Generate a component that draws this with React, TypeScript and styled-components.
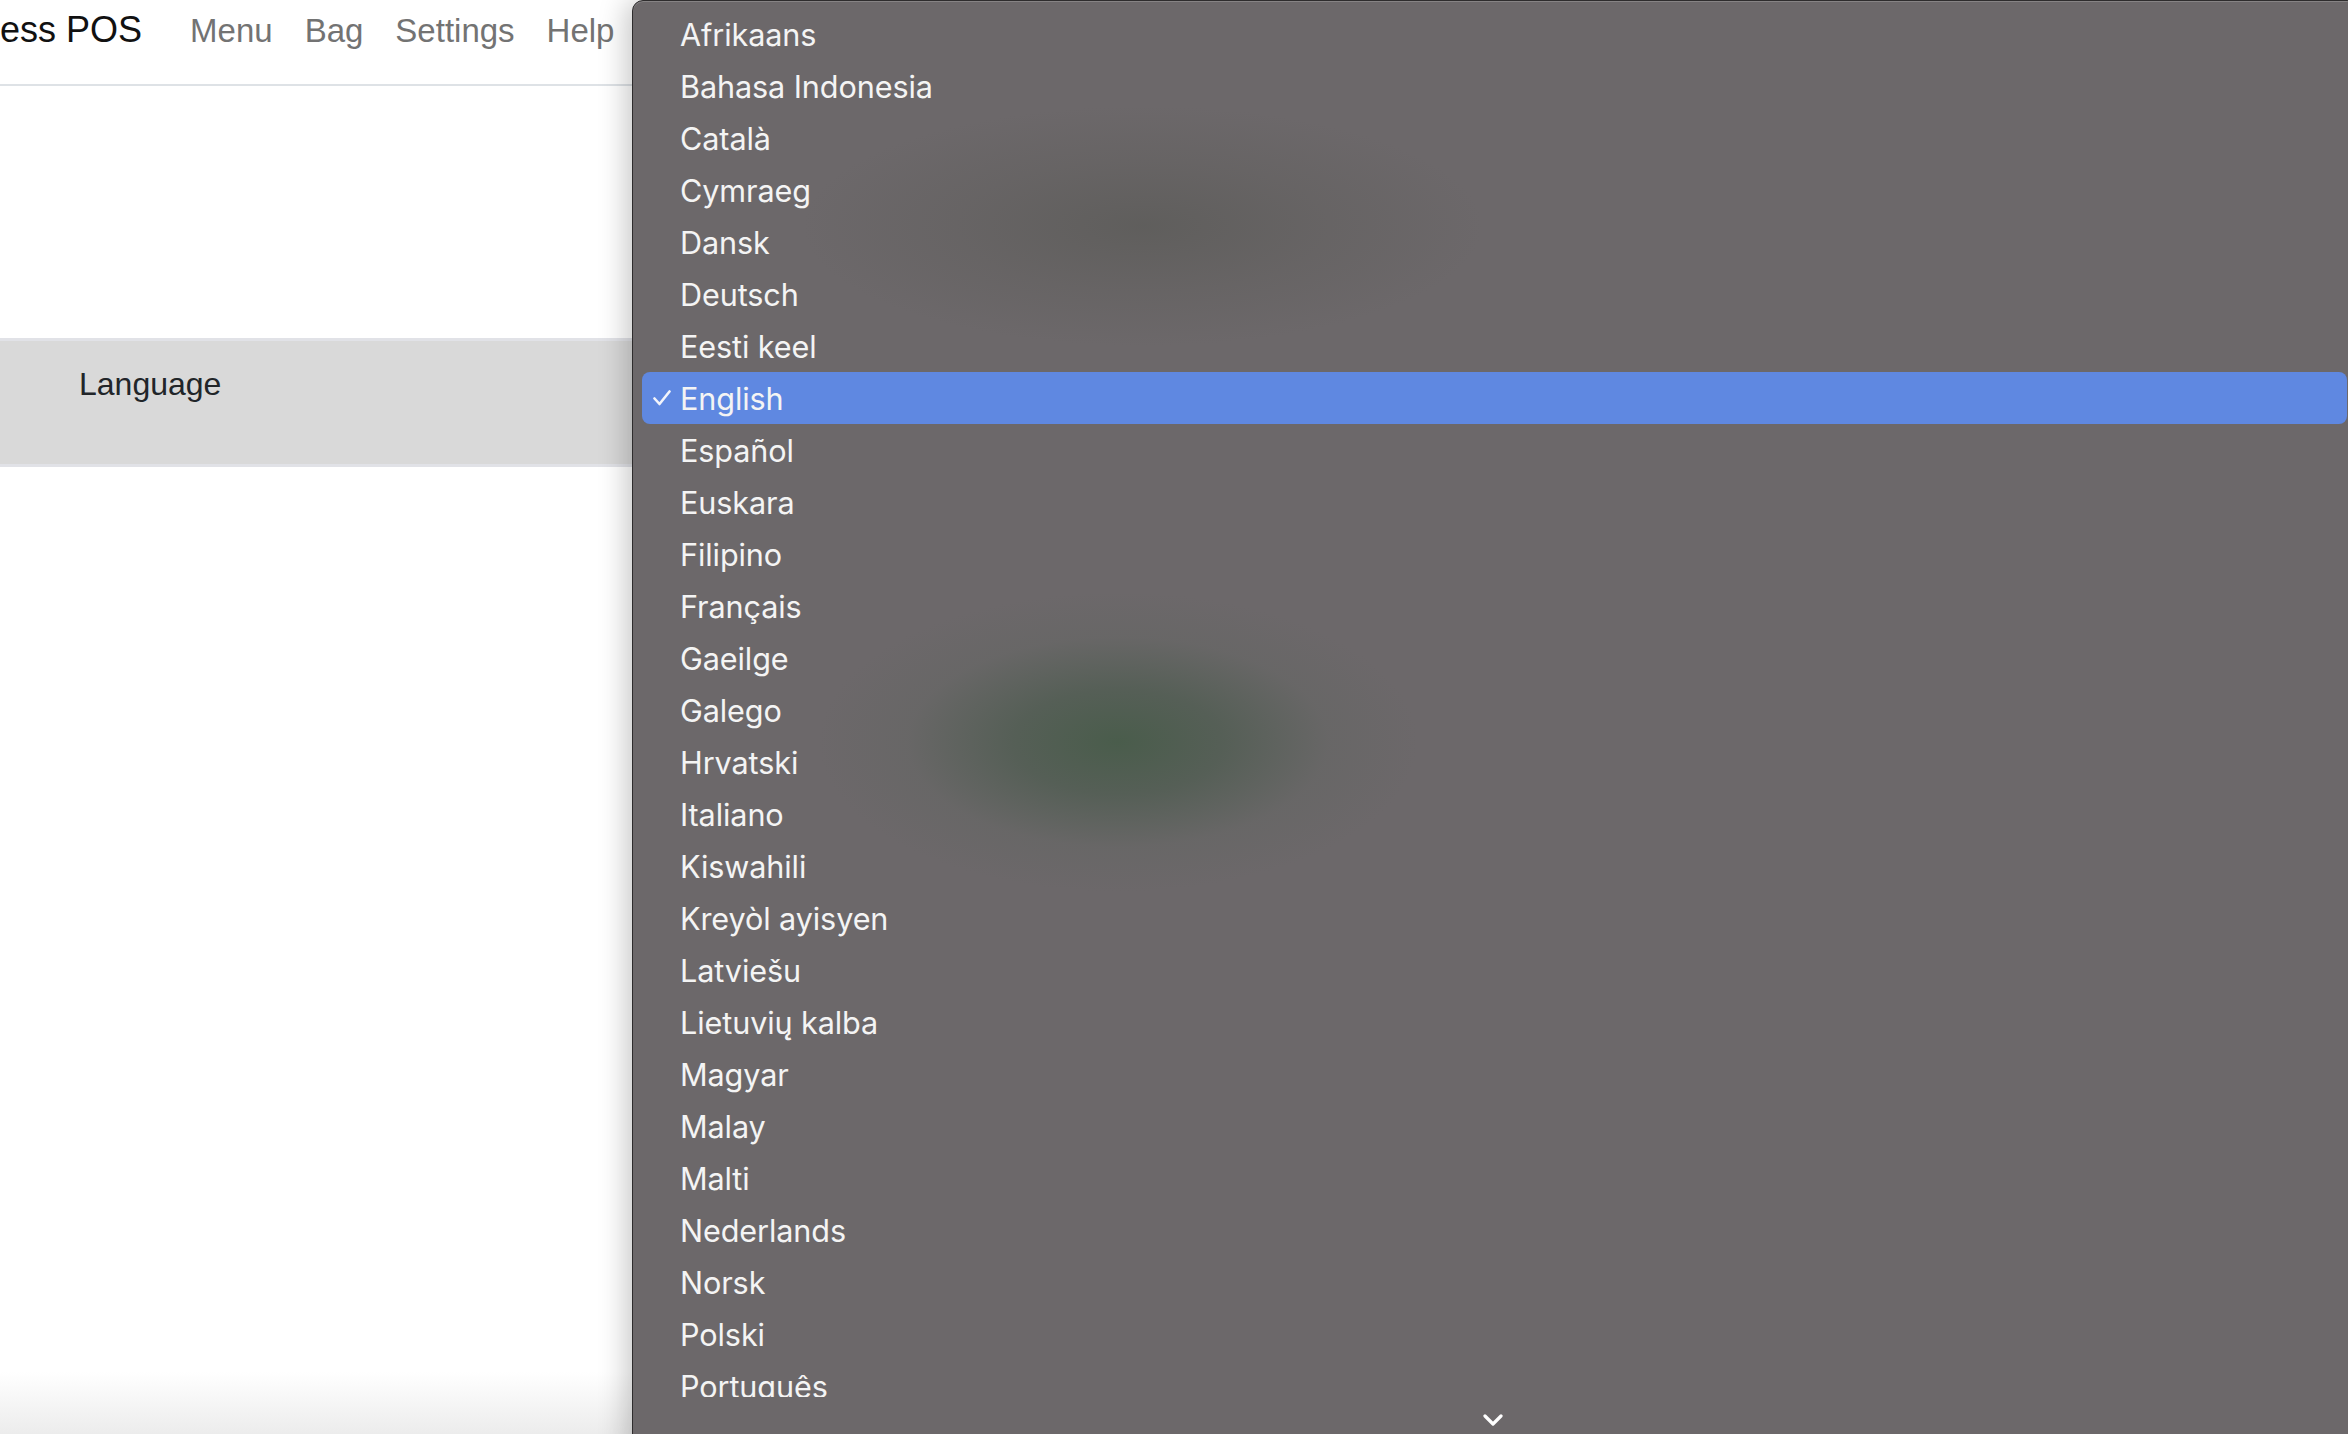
import React from "react";
import styled, { createGlobalStyle } from "styled-components";

const GlobalStyle = createGlobalStyle`
  html, body {
    margin: 0;
    padding: 0;
    height: 100%;
    overflow: hidden;
    background: #ffffff;
  }
  #root {
    height: 100%;
  }
  * { box-sizing: border-box; }
`;

const Page = styled.div`
  position: relative;
  width: 2348px;
  height: 1434px;
  overflow: hidden;
  background: linear-gradient(to bottom, #ffffff 0px, #ffffff 1372px, #ececec 1434px);
  font-family: "Liberation Sans", Arial, sans-serif;
`;

const Header = styled.header`
  height: 86px;
  display: flex;
  align-items: center;
  padding-bottom: 24px;
  border-bottom: 2px solid #dee2e6;
  background: #ffffff;
`;

const Brand = styled.div`
  font-size: 36px;
  color: #111111;
  margin-right: 32px;
  white-space: nowrap;
  line-height: 1;
`;

const Nav = styled.nav`
  display: flex;
  align-items: center;
`;

const NavLink = styled.span`
  font-size: 33px;
  color: #737373;
  padding: 0 16px;
  line-height: 1;
`;

const Content = styled.main`
  padding-top: 252px;
`;

const SettingBand = styled.div`
  height: 129px;
  background: #d9d9d9;
  border-top: 3px solid #e1e2e7;
  border-bottom: 3px solid #e1e2e7;
  padding: 27px 0 0 79px;
`;

const SettingLabel = styled.div`
  font-size: 32px;
  color: #212529;
  line-height: 1;
`;

const MenuPanel = styled.div`
  position: absolute;
  top: 0;
  left: 632px;
  width: 1726px;
  height: 1460px;
  border-radius: 11px;
  border: 1.5px solid #2e2c2d;
  box-shadow: inset 0 1px 0 rgba(255, 255, 255, 0.18), -6px 0 28px rgba(0, 0, 0, 0.22);
  background:
    radial-gradient(ellipse 300px 150px at 485px 741px, rgba(72, 92, 74, 0.95) 0%, rgba(78, 92, 80, 0.75) 35%, rgba(96, 100, 96, 0.35) 70%, rgba(108, 104, 106, 0) 100%),
    radial-gradient(ellipse 340px 120px at 510px 225px, rgba(94, 93, 91, 0.9) 0%, rgba(98, 96, 95, 0.5) 55%, rgba(108, 104, 106, 0) 100%),
    #6c686a;
  display: flex;
  flex-direction: column;
  overflow: hidden;
  font-family: Inter, "Noto Sans", sans-serif;
`;

const ItemList = styled.ul`
  list-style: none;
  margin: 0;
  padding: 7px 0 0 0;
  height: 1396px;
  overflow: hidden;
  flex: none;
`;

const Item = styled.li<{ $selected?: boolean }>`
  height: 52px;
  margin: 0 10px 0 9px;
  border-radius: 8px;
  display: flex;
  align-items: center;
  background: ${(p) => (p.$selected ? "#5f88e1" : "transparent")};
  color: #f4f4f4;
  font-size: 30.6px;
  letter-spacing: -0.1px;
`;

const CheckSlot = styled.span`
  width: 38px;
  flex: none;
  display: flex;
  align-items: center;
  padding-left: 11px;
`;

const ScrollFooter = styled.div`
  height: 40px;
  display: flex;
  justify-content: center;
  padding-top: 17px;
  padding-right: 4px;
`;

const languages = [
  "Afrikaans",
  "Bahasa Indonesia",
  "Català",
  "Cymraeg",
  "Dansk",
  "Deutsch",
  "Eesti keel",
  "English",
  "Español",
  "Euskara",
  "Filipino",
  "Français",
  "Gaeilge",
  "Galego",
  "Hrvatski",
  "Italiano",
  "Kiswahili",
  "Kreyòl ayisyen",
  "Latviešu",
  "Lietuvių kalba",
  "Magyar",
  "Malay",
  "Malti",
  "Nederlands",
  "Norsk",
  "Polski",
  "Português",
];

const Check = () => (
  <svg width="18" height="16" viewBox="0 0 18 16" fill="none">
    <path d="M1.5 8.5 L6.5 14 L16.5 1.5" stroke="#f2f4fb" strokeWidth="2.6" strokeLinecap="round" strokeLinejoin="round" />
  </svg>
);

const Chevron = () => (
  <svg width="20" height="12" viewBox="0 0 20 12" fill="none">
    <path d="M2 2 L10 10 L18 2" stroke="#ffffff" strokeWidth="3.2" strokeLinecap="round" strokeLinejoin="round" />
  </svg>
);

export default function App() {
  return (
    <>
      <GlobalStyle />
      <Page>
        <Header>
          <Brand>ess POS</Brand>
          <Nav>
            <NavLink>Menu</NavLink>
            <NavLink>Bag</NavLink>
            <NavLink>Settings</NavLink>
            <NavLink>Help</NavLink>
          </Nav>
        </Header>
        <Content>
          <SettingBand>
            <SettingLabel>Language</SettingLabel>
          </SettingBand>
        </Content>
        <MenuPanel>
          <ItemList>
            {languages.map((lang) => (
              <Item key={lang} $selected={lang === "English"}>
                <CheckSlot>{lang === "English" ? <Check /> : null}</CheckSlot>
                {lang}
              </Item>
            ))}
          </ItemList>
          <ScrollFooter>
            <Chevron />
          </ScrollFooter>
        </MenuPanel>
      </Page>
    </>
  );
}
